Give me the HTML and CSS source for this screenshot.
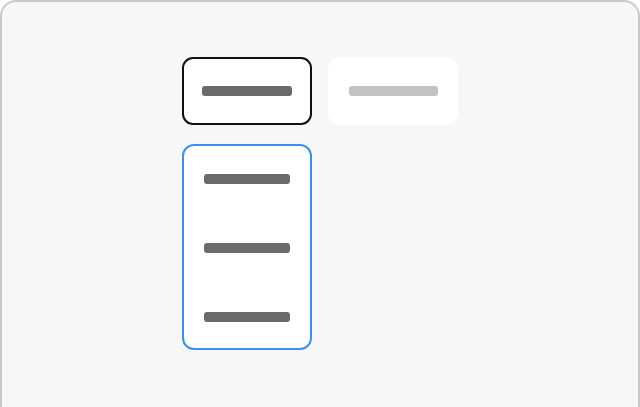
FILE: index.html
```html
<!DOCTYPE html>
<html lang="en">
<head>
<meta charset="utf-8">
<title>Tabs</title>
<link rel="stylesheet" href="styles.css">
</head>
<body>
<div class="frame">
  <div class="stage">
    <div class="row">
      <div class="tab tab-active"><span class="bar"></span></div>
      <div class="tab tab-muted"><span class="bar bar-light"></span></div>
    </div>
    <div class="list">
      <div class="item"><span class="bar bar-item"></span></div>
      <div class="item"><span class="bar bar-item"></span></div>
      <div class="item"><span class="bar bar-item"></span></div>
    </div>
  </div>
</div>
</body>
</html>
```

FILE: styles.css
```css
html, body {
  margin: 0;
  padding: 0;
  width: 640px;
  height: 407px;
  overflow: hidden;
  background: #ffffff;
  font-family: "Liberation Sans", Arial, sans-serif;
}

.frame {
  box-sizing: border-box;
  width: 640px;
  height: 407px;
  border: 2px solid #c9c9c9;
  border-bottom: 0;
  border-radius: 16px 16px 0 0;
  background: #f7f7f7;
  padding: 55px 0 0 180px;
}

.stage {
  display: flex;
  flex-direction: column;
  gap: 19px;
}

.row {
  display: flex;
  gap: 16px;
}

.tab {
  box-sizing: border-box;
  width: 130px;
  height: 68px;
  border-radius: 11px;
  background: #ffffff;
  display: flex;
  align-items: center;
  justify-content: center;
}

.tab-active {
  border: 2px solid #111111;
}

.tab-muted {
  border: 2px solid #ffffff;
  border-radius: 12px;
}

.bar {
  display: block;
  width: 90px;
  height: 10px;
  border-radius: 3px;
  background: #6b6b6b;
}

.bar-light {
  width: 89px;
  background: #c2c2c2;
}

.list {
  box-sizing: border-box;
  width: 130px;
  height: 206px;
  border: 2px solid #3b8ff5;
  border-radius: 12px;
  background: #ffffff;
  padding: 28px 0 27px;
  display: flex;
  flex-direction: column;
  align-items: center;
  gap: 59px;
}

.item {
  display: flex;
  justify-content: center;
}

.bar-item {
  width: 86px;
  height: 10px;
}
```
